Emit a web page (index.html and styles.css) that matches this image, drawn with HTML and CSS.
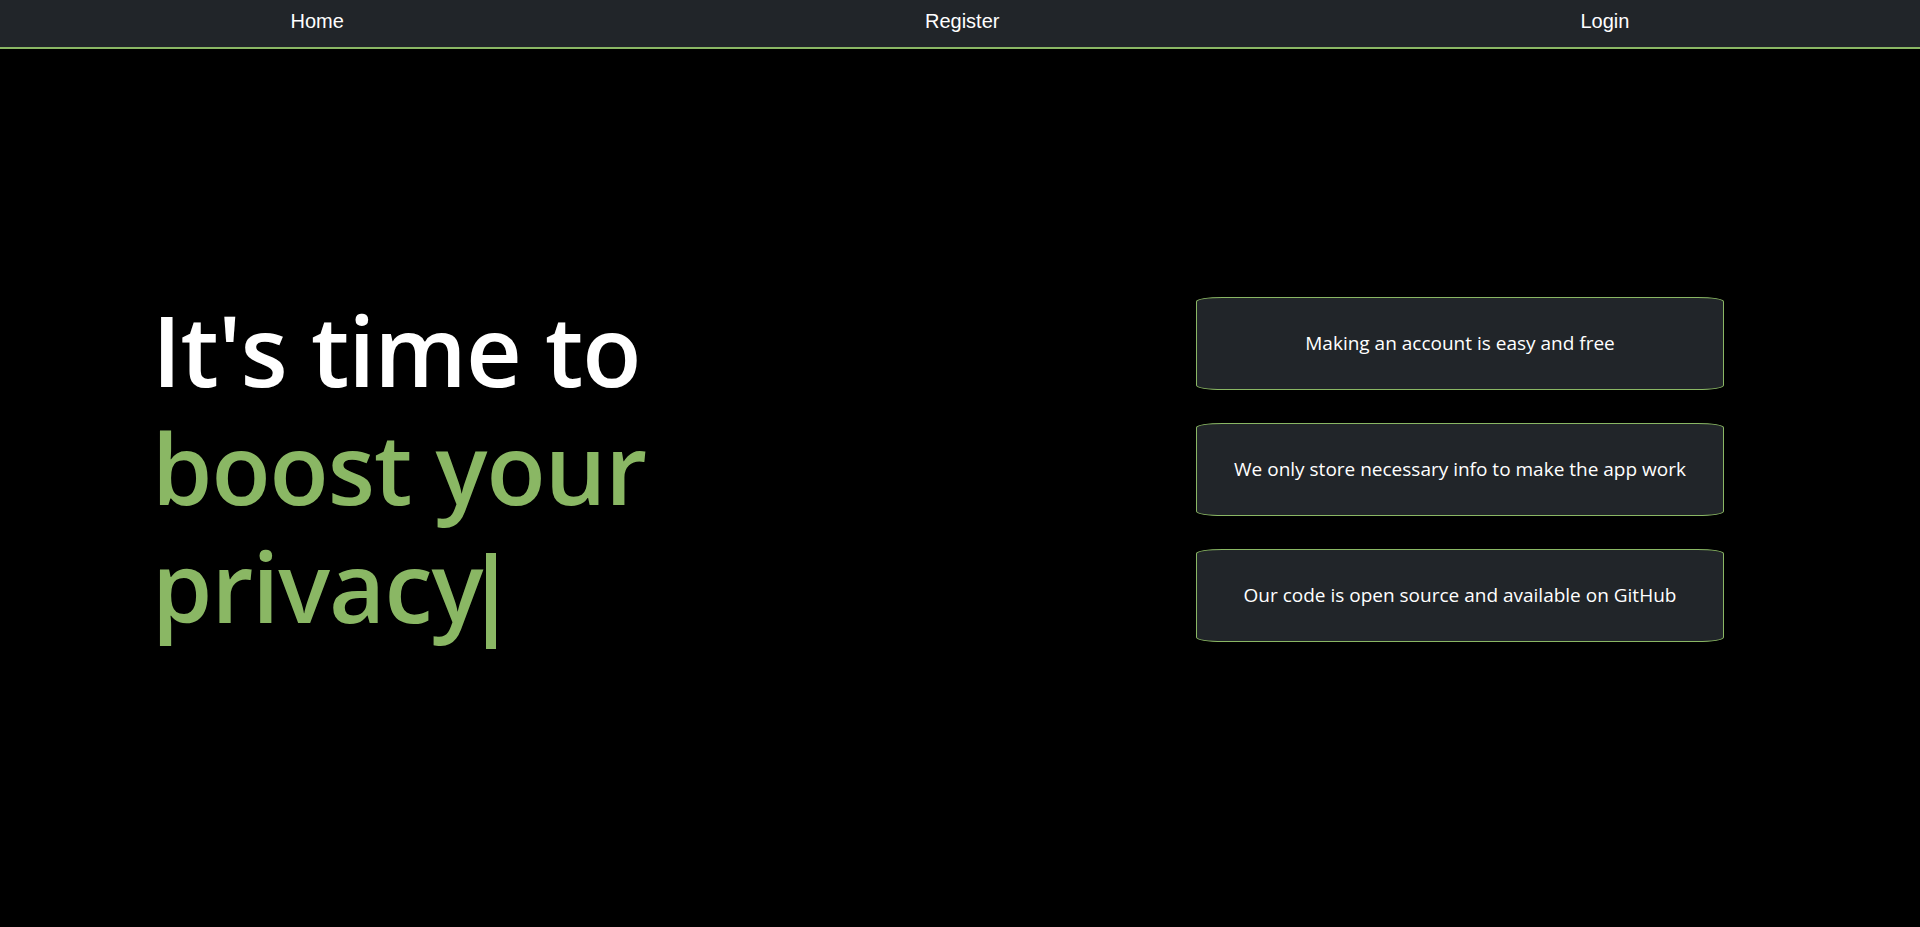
FILE: index.html
```html
<!DOCTYPE html>
<html lang="en">
<head>
<meta charset="utf-8">
<title>Boost your privacy</title>
<link rel="stylesheet" href="styles.css">
</head>
<body>
<nav class="nav">
  <a class="nav-link" href="#">Home</a>
  <a class="nav-link" href="#">Register</a>
  <a class="nav-link" href="#">Login</a>
</nav>
<main class="hero">
  <h1 class="headline"><span class="white">It's time to</span><br><span class="green">boost your<br>privacy<span class="caret" aria-hidden="true"></span></span></h1>
  <div class="cards">
    <div class="card">Making an account is easy and free</div>
    <div class="card">We only store necessary info to make the app work</div>
    <div class="card">Our code is open source and available on GitHub</div>
  </div>
</main>
</body>
</html>
```
FILE: styles.css
```css
html, body {
  margin: 0;
  padding: 0;
  background: #000;
  height: 100%;
}
body {
  font-family: "Open Sans", "Noto Sans", sans-serif;
  color: #fff;
}
.nav {
  display: flex;
  justify-content: space-around;
  height: 47px;
  background: #212529;
  border-bottom: 2px solid #8ab764;
  align-items: center;
}
.nav-link {
  font-family: "Liberation Sans", Arial, sans-serif;
  font-size: 20px;
  color: #fff;
  text-decoration: none;
  padding-bottom: 4px;
}
.hero {
  display: flex;
  align-items: center;
  height: 878px;
  box-sizing: border-box;
  padding: 0 196px 38px 152px;
}
.headline {
  margin: 0;
  font-size: 97px;
  font-weight: 600;
  line-height: 118px;
  letter-spacing: -1px;
}
.white { color: #fff; }
.green { color: #8ab764; }
.caret {
  display: inline-block;
  width: 10px;
  height: 96px;
  margin-left: 4px;
  vertical-align: -26px;
  background: #8ab764;
}
.cards {
  margin-left: auto;
  width: 528px;
  display: flex;
  flex-direction: column;
  gap: 33px;
}
.card {
  height: 93px;
  box-sizing: border-box;
  display: flex;
  align-items: center;
  justify-content: center;
  background: #212529;
  border: 1px solid #8ab764;
  border-radius: 5%;
  font-size: 19px;
  color: #fff;
}
```
